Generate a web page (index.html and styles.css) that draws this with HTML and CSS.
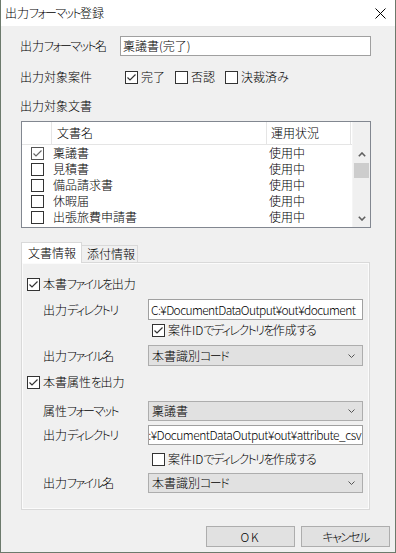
FILE: index.html
```html
<!DOCTYPE html>
<html lang="ja">
<head>
<meta charset="utf-8">
<title>出力フォーマット登録</title>
<link rel="stylesheet" href="styles.css">
</head>
<body>
<div class="window">
  <div class="titlebar">
    <span class="title">出力<span class="k">フォーマット</span>登録</span>
    <svg class="close" viewBox="0 0 11 11"><path d="M0.5 0.5 L10.5 10.5 M10.5 0.5 L0.5 10.5" stroke="#000" stroke-width="1" fill="none"/></svg>
  </div>
  <div class="body">
    <div class="row name-row">
      <span class="label">出力<span class="k">フォーマット</span>名</span>
      <div class="textbox wide"><span>稟議書(完了)</span></div>
    </div>
    <div class="row case-row">
      <span class="label">出力対象案件</span>
      <div class="checks">
        <span class="check"><span class="box"><svg viewBox="0 0 11 11"><polyline points="1.5,5.5 4,8 9.5,2.5"/></svg></span><span class="txt">完了</span></span>
        <span class="check"><span class="box"></span><span class="txt">否認</span></span>
        <span class="check"><span class="box"></span><span class="txt">決裁済<span class="k">み</span></span></span>
      </div>
    </div>
    <div class="section-label">出力対象文書</div>
    <div class="listbox">
      <div class="list-main">
        <div class="list-header">
          <div class="hcell c0"></div>
          <div class="hcell c1">文書名</div>
          <div class="hcell c2">運用状況</div>
        </div>
        <div class="list-row"><span class="cell c0"><span class="box gray"><svg viewBox="0 0 11 11"><polyline points="1.5,5.5 4,8 9.5,2.5"/></svg></span></span><span class="cell c1">稟議書</span><span class="cell c2">使用中</span></div>
        <div class="list-row"><span class="cell c0"><span class="box"></span></span><span class="cell c1">見積書</span><span class="cell c2">使用中</span></div>
        <div class="list-row"><span class="cell c0"><span class="box"></span></span><span class="cell c1">備品請求書</span><span class="cell c2">使用中</span></div>
        <div class="list-row"><span class="cell c0"><span class="box"></span></span><span class="cell c1">休暇届</span><span class="cell c2">使用中</span></div>
        <div class="list-row"><span class="cell c0"><span class="box"></span></span><span class="cell c1">出張旅費申請書</span><span class="cell c2">使用中</span></div>
      </div>
      <div class="vscroll">
        <div class="sbtn"><svg viewBox="0 0 8 5"><polyline points="0.8,4.2 4,1 7.2,4.2"/></svg></div>
        <div class="thumb"></div>
        <div class="sbtn down"><svg viewBox="0 0 8 5"><polyline points="0.8,0.8 4,4 7.2,0.8"/></svg></div>
      </div>
    </div>
    <div class="tabs">
      <div class="tabstrip">
        <div class="tab active">文書情報</div>
        <div class="tab">添付情報</div>
      </div>
      <div class="tabpanel">
        <div class="pcheck cb1"><span class="check"><span class="box"><svg viewBox="0 0 11 11"><polyline points="1.5,5.5 4,8 9.5,2.5"/></svg></span><span class="txt">本書<span class="k">ファイルを</span>出力</span></span></div>
        <div class="prow dir1">
          <span class="label">出力<span class="k">ディレクトリ</span></span>
          <div class="textbox field"><span class="lat">C:¥DocumentDataOutput¥out¥document</span></div>
        </div>
        <div class="psub cb2"><span class="check"><span class="box"><svg viewBox="0 0 11 11"><polyline points="1.5,5.5 4,8 9.5,2.5"/></svg></span><span class="txt">案件ID<span class="k">でディレクトリを</span>作成<span class="k">する</span></span></span></div>
        <div class="prow combo1">
          <span class="label">出力<span class="k">ファイル</span>名</span>
          <div class="combo field"><span>本書識別<span class="k">コード</span></span><svg viewBox="0 0 7 4"><polyline points="0.5,0.5 3.5,3.5 6.5,0.5"/></svg></div>
        </div>
        <div class="pcheck cb3"><span class="check"><span class="box"><svg viewBox="0 0 11 11"><polyline points="1.5,5.5 4,8 9.5,2.5"/></svg></span><span class="txt">本書属性<span class="k">を</span>出力</span></span></div>
        <div class="prow combo2">
          <span class="label">属性<span class="k">フォーマット</span></span>
          <div class="combo field"><span>稟議書</span><svg viewBox="0 0 7 4"><polyline points="0.5,0.5 3.5,3.5 6.5,0.5"/></svg></div>
        </div>
        <div class="prow dir2">
          <span class="label">出力<span class="k">ディレクトリ</span></span>
          <div class="textbox field scrolled"><span class="lat">C:¥DocumentDataOutput¥out¥attribute_csv</span></div>
        </div>
        <div class="psub cb4"><span class="check"><span class="box"></span><span class="txt">案件ID<span class="k">でディレクトリを</span>作成<span class="k">する</span></span></span></div>
        <div class="prow combo3">
          <span class="label">出力<span class="k">ファイル</span>名</span>
          <div class="combo field"><span>本書識別<span class="k">コード</span></span><svg viewBox="0 0 7 4"><polyline points="0.5,0.5 3.5,3.5 6.5,0.5"/></svg></div>
        </div>
      </div>
    </div>
    <div class="buttons">
      <div class="button"><span class="ok">OK</span></div>
      <div class="button"><span class="k">キャンセル</span></div>
    </div>
  </div>
</div>
</body>
</html>
```
FILE: styles.css
```css
* { box-sizing: border-box; }
html, body { margin: 0; padding: 0; }
body {
  width: 396px;
  height: 553px;
  background: #f0f0f0;
  font-family: "Noto Sans CJK JP", sans-serif;
  font-size: 12px;
  font-weight: 300;
  line-height: 16px;
  font-feature-settings: "palt";
  color: #000;
}
.k { letter-spacing: -1.6px; }
.lat { letter-spacing: -0.6px; }
.scrolled .lat { letter-spacing: -0.5px; }
.ok { letter-spacing: 2px; }
.window {
  width: 396px;
  height: 553px;
  border: 1px solid #6c7a6c;
  border-top: none;
  background: #f0f0f0;
  display: flex;
  flex-direction: column;
}
.titlebar {
  height: 26px;
  flex: none;
  background: #fff;
  display: flex;
  align-items: center;
  justify-content: space-between;
  padding: 0 9px 0 4px;
}
.close { width: 11px; height: 11px; display: block; }
.body {
  padding: 10px 0 0 19px;
  display: flex;
  flex-direction: column;
}
.row { display: flex; align-items: center; }
.label { white-space: nowrap; flex: none; }
.name-row { height: 20px; }
.name-row .label { width: 100px; }
.textbox {
  background: #fff;
  border: 1px solid #a0a0a0;
  padding-left: 2px;
  display: flex;
  align-items: center;
  white-space: nowrap;
  overflow: hidden;
}
.textbox span { flex: none; }
.textbox.wide { width: 251px; height: 20px; }
.case-row { height: 16px; margin-top: 13px; }
.case-row .label { width: 105px; }
.checks { display: flex; gap: 10px; }
.check { display: flex; align-items: center; gap: 3px; white-space: nowrap; }
.txt { white-space: nowrap; }
.box {
  width: 13px;
  height: 13px;
  flex: none;
  border: 1px solid #333;
  background: #fff;
  display: flex;
}
.box svg { width: 11px; height: 11px; display: block; }
.box polyline { fill: none; stroke: #333; stroke-width: 1.2; }
.box.gray { border-color: #555; }
.box.gray polyline { stroke: #666; }
.section-label { margin-top: 13px; height: 16px; }
.listbox {
  margin-top: 7px;
  margin-left: 1px;
  width: 350px;
  height: 107px;
  border: 1px solid #828790;
  background: #fff;
  display: flex;
}
.list-main { width: 330px; flex: none; display: flex; flex-direction: column; }
.list-header {
  display: flex;
  height: 23px;
  border-bottom: 1px solid #e5e5e5;
}
.hcell {
  border-right: 1px solid #e5e5e5;
  display: flex;
  align-items: center;
  white-space: nowrap;
}
.c0 { width: 30px; flex: none; }
.c1 { width: 215px; flex: none; }
.c2 { width: 84px; flex: none; }
.hcell.c1 { padding-left: 5px; }
.hcell.c2 { padding-left: 4px; }
.list-row { display: flex; height: 16px; align-items: center; }
.cell { display: flex; align-items: center; white-space: nowrap; }
.cell.c0 { padding-left: 9px; }
.cell.c1 { padding-left: 1px; }
.cell.c2 { padding-left: 2px; }
.vscroll {
  flex: 1;
  background: #f0f0f0;
  border-left: 1px solid #f5f5f5;
  display: flex;
  flex-direction: column;
  padding-top: 23px;
}
.sbtn { height: 18px; display: flex; align-items: center; justify-content: center; }
.sbtn svg { width: 8px; height: 5px; display: block; }
.sbtn polyline { fill: none; stroke: #606060; stroke-width: 1.6; }
.sbtn.down { margin-top: auto; }
.thumb { height: 15px; margin-left: 1px; width: 15px; background: #cdcdcd; }
.tabs { margin-top: 14px; margin-left: 1px; width: 349px; }
.tabstrip { display: flex; align-items: flex-end; height: 20px; }
.tab {
  height: 17px;
  width: 56px;
  border: 1px solid #d9d9d9;
  border-left: none;
  border-bottom: none;
  background: #f0f0f0;
  padding-left: 5px;
  display: flex;
  align-items: center;
  white-space: nowrap;
}
.tab.active {
  height: 21px;
  width: 61px;
  margin-bottom: -1px;
  border-left: 1px solid #d9d9d9;
  background: #fff;
  padding-left: 6px;
  position: relative;
  z-index: 1;
}
.tabpanel {
  height: 248px;
  border: 1px solid #d9d9d9;
  box-shadow: inset 0 0 0 1px #fbfbfb;
  background: #f0f0f0;
  display: flex;
  flex-direction: column;
  padding-left: 5px;
}
.pcheck { height: 16px; display: flex; align-items: center; }
.psub { height: 16px; display: flex; align-items: center; padding-left: 125px; }
.prow { display: flex; align-items: center; padding-left: 16px; }
.prow .label { width: 105px; }
.field { width: 215px; }
.textbox.field { height: 21px; }
.textbox.scrolled { height: 20px; justify-content: flex-end; padding-left: 0; padding-right: 1px; }
.combo {
  height: 21px;
  background: #e1e1e1;
  border: 1px solid #adadad;
  display: flex;
  align-items: center;
  justify-content: space-between;
  padding: 0 7px 0 3px;
  white-space: nowrap;
}
.combo svg { width: 7px; height: 4px; display: block; }
.combo polyline { fill: none; stroke: #555; stroke-width: 1; }
.cb1 { margin-top: 13px; }
.dir1 { margin-top: 7px; }
.cb2 { margin-top: 2px; }
.combo1 { margin-top: 7px; }
.cb3 { margin-top: 8px; }
.combo2 { margin-top: 11px; }
.combo2 .combo, .combo3 .combo { height: 20px; }
.dir2 { margin-top: 4px; }
.cb4 { margin-top: 6px; }
.combo3 { margin-top: 6px; }
.buttons {
  margin-top: 16px;
  display: flex;
  justify-content: flex-end;
  gap: 6px;
  padding-right: 5px;
}
.button {
  width: 89px;
  height: 21px;
  background: #e1e1e1;
  border: 1px solid #adadad;
  display: flex;
  align-items: center;
  justify-content: center;
}
```
